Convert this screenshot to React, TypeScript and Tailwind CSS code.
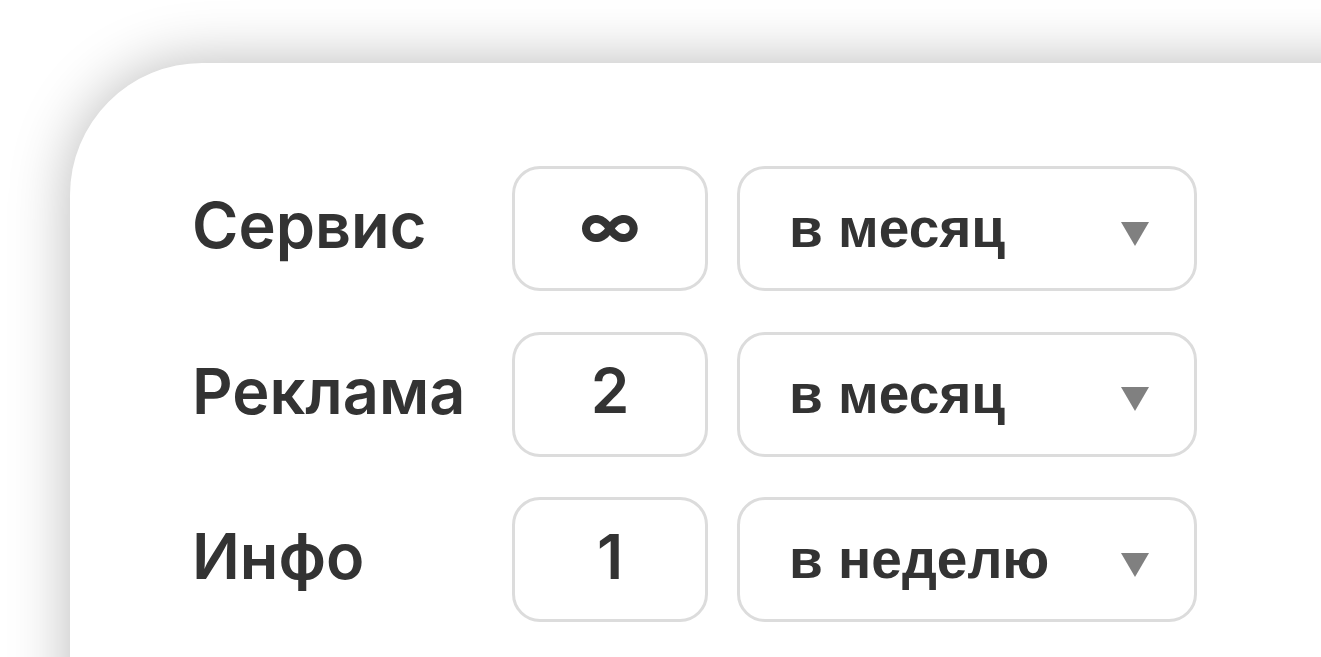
import React from "react";

const rows = [
  { label: "Сервис", value: "∞", period: "в месяц" },
  { label: "Реклама", value: "2", period: "в месяц" },
  { label: "Инфо", value: "1", period: "в неделю" },
];

export default function App() {
  return (
    <div className="w-full h-[657px] overflow-hidden bg-white pt-[63px] pl-[70px]">
      <div className="w-[1400px] h-[800px] bg-white rounded-tl-[132px] shadow-[0_0_60px_rgba(0,0,0,0.28)] pl-[122px]">
        <div className="pt-[103px] flex flex-col gap-[40.5px]">
          {rows.map((r) => (
            <div key={r.label} className="flex items-center h-[125px]">
              <div
                className="w-[320px] text-[63px] leading-none font-semibold text-[#333333] pb-[6px]"
                style={{ fontFamily: "Inter, 'Liberation Sans', sans-serif" }}
              >
                {r.label}
              </div>
              <div
                className="w-[196px] h-[125px] border-[3px] border-[#dcdcdc] rounded-[28px] flex items-center justify-center text-[#333333] leading-none"
                style={{ fontFamily: "Inter, 'Liberation Sans', sans-serif" }}
              >
                {r.value === "∞" ? (
                  <span className="text-[62px] leading-none font-bold pb-[6px]">∞</span>
                ) : (
                  <span className="text-[62px] font-semibold pb-[6px]">{r.value}</span>
                )}
              </div>
              <div className="ml-[29px] w-[460px] h-[125px] border-[3px] border-[#dcdcdc] rounded-[28px] flex items-center pl-[49px] pr-[45px]">
                <span
                  className="flex-1 text-[55px] font-bold leading-none text-[#333333]"
                  style={{ fontFamily: "'Liberation Sans', Arial, sans-serif" }}
                >
                  {r.period}
                </span>
                <svg width="28" height="24" viewBox="0 0 28 24" className="mt-[10px]">
                  <polygon points="0,0 28,0 14,24" fill="#808080" />
                </svg>
              </div>
            </div>
          ))}
        </div>
      </div>
    </div>
  );
}
